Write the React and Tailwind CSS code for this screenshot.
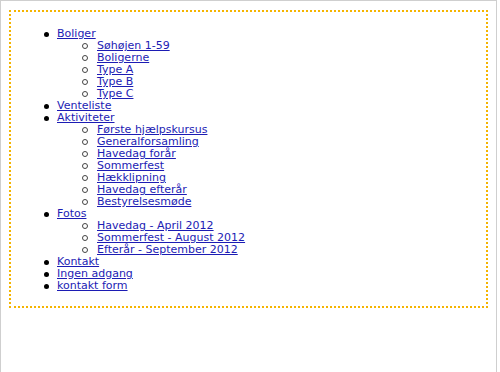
const MENU = [
  {
    label: "Boliger",
    children: ["Søhøjen 1-59", "Boligerne", "Type A", "Type B", "Type C"],
  },
  { label: "Venteliste" },
  {
    label: "Aktiviteter",
    children: [
      "Første hjælpskursus",
      "Generalforsamling",
      "Havedag forår",
      "Sommerfest",
      "Hækklipning",
      "Havedag efterår",
      "Bestyrelsesmøde",
    ],
  },
  {
    label: "Fotos",
    children: ["Havedag - April 2012", "Sommerfest - August 2012", "Efterår - September 2012"],
  },
  { label: "Kontakt" },
  { label: "Ingen adgang" },
  { label: "kontakt form" },
];

function Link({ children }) {
  return (
    <a href="#" className="text-[#1c1cb4] underline">
      {children}
    </a>
  );
}

export default function App() {
  return (
    <div
      className="w-[497px] h-[372px] border-t border-l border-r border-[#cfcfcf] bg-white pt-[9px] pl-2 text-[11px] leading-[12px]"
      style={{ fontFamily: '"DejaVu Sans", Verdana, sans-serif' }}
    >
      {/* Dotted menu box */}
      <div className="w-[479px] border-2 border-dotted border-[#f5b400] px-[6px] py-[4px]">
        <ul className="pl-10 mt-[12px] mb-[10px]">
          {MENU.map((item) => (
            <li key={item.label}>
              <div className="flex items-center h-[12px]">
                <span className="-ml-[13px] mr-[8px] w-[5px] h-[5px] rounded-full bg-black" />
                <Link>{item.label}</Link>
              </div>
              {item.children && (
                <ul className="pl-10">
                  {item.children.map((c) => (
                    <li key={c} className="flex items-center h-[12px]">
                      <span className="-ml-[15px] mr-[9px] w-[6px] h-[6px] rounded-full border-[1.5px] border-[#444]" />
                      <Link>{c}</Link>
                    </li>
                  ))}
                </ul>
              )}
            </li>
          ))}
        </ul>
      </div>
    </div>
  );
}
